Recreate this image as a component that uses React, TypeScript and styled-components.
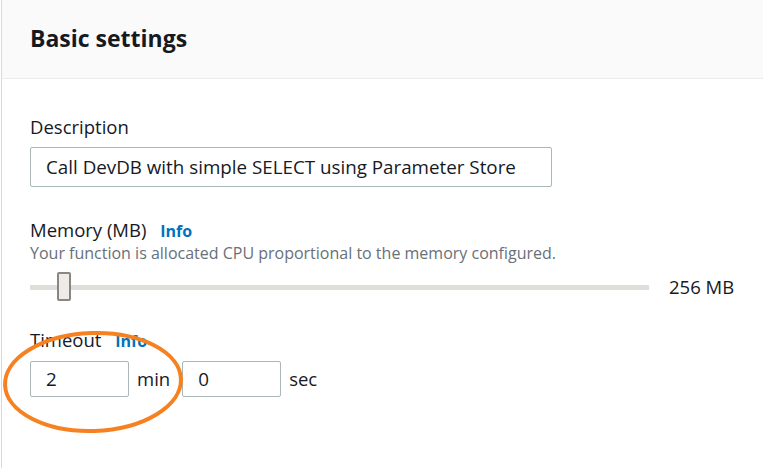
import styled, { createGlobalStyle } from "styled-components";

const GlobalStyle = createGlobalStyle`
  body {
    margin: 0;
    background: #ffffff;
    font-family: "Open Sans", "Noto Sans", "Liberation Sans", sans-serif;
    color: #16191f;
  }
  * {
    box-sizing: border-box;
  }
`;

const memory = { min: 128, max: 3008, value: 256 };

export default function App() {
  const handleLeft = Math.round(
    ((memory.value - memory.min) / (memory.max - memory.min)) * 600
  );
  return (
    <>
      <GlobalStyle />
      <Panel>
        <Header>
          <Title>Basic settings</Title>
        </Header>
        <Body>
          <Field>
            <Label>Description</Label>
            <TextInput
              width="522px"
              height="40px"
              defaultValue="Call DevDB with simple SELECT using Parameter Store"
            />
          </Field>

          <Field top="32px">
            <Label>
              Memory (MB) <Info>Info</Info>
            </Label>
            <Hint>
              Your function is allocated CPU proportional to the memory
              configured.
            </Hint>
            <SliderRow>
              <Track>
                <Handle style={{ left: `${handleLeft}px` }} />
              </Track>
              <Value>{memory.value} MB</Value>
            </SliderRow>
          </Field>

          <Field top="29px">
            <Label>
              Timeout <Info>Info</Info>
            </Label>
            <TimeRow>
              <TextInput width="99px" height="36px" defaultValue="2" />
              <Unit>min</Unit>
              <TextInput width="99px" height="36px" defaultValue="0" />
              <Unit>sec</Unit>
            </TimeRow>
          </Field>
        </Body>
        <Mark width="190" height="110" viewBox="0 0 190 110">
          <ellipse
            cx="92"
            cy="53"
            rx="88"
            ry="49"
            fill="none"
            stroke="#f68121"
            strokeWidth="4"
            transform="rotate(-2 92 53)"
          />
        </Mark>
      </Panel>
    </>
  );
}

const Panel = styled.div`
  position: relative;
  height: 468px;
  margin-left: 1px;
  border-left: 1px solid #d5dbdb;
`;

const Header = styled.div`
  height: 79px;
  padding: 0 28px;
  display: flex;
  align-items: center;
  background: #fafafa;
  border-bottom: 1px solid #eaeded;
`;

const Title = styled.h2`
  margin: 0 0 2px;
  font-size: 23px;
  font-weight: 700;
  line-height: 30px;
`;

const Body = styled.div`
  padding: 37px 28px 0;
`;

const Field = styled.div<{ top?: string }>`
  margin-top: ${({ top }) => top ?? "0"};
  display: flex;
  flex-direction: column;
`;

const Label = styled.div`
  font-size: 18.5px;
  line-height: 22px;
  margin-bottom: 1px;
`;

const Info = styled.span`
  margin-left: 9px;
  color: #0073bb;
  font-size: 16px;
  font-weight: 700;
`;

const Hint = styled.div`
  font-size: 16px;
  line-height: 20px;
  color: #687078;
`;

const TextInput = styled.input<{ width: string; height: string }>`
  margin-top: 8px;
  width: ${({ width }) => width};
  height: ${({ height }) => height};
  padding: 0 15px;
  border: 1px solid #aab7b8;
  border-radius: 2px;
  font-family: inherit;
  font-size: 18.8px;
  color: #16191f;
  background: #ffffff;
  outline: 0;
`;

const SliderRow = styled.div`
  margin-top: 8px;
  height: 29px;
  display: flex;
  align-items: center;
  gap: 20px;
`;

const Track = styled.div`
  position: relative;
  width: 619px;
  height: 5px;
  margin-top: 3px;
  background: #e1ddd8;
`;

const Handle = styled.div`
  position: absolute;
  top: -13px;
  width: 14px;
  height: 29px;
  background: #eeeceb;
  border: 2px solid #8d8680;
  border-radius: 2px;
`;

const Value = styled.span`
  font-size: 18.5px;
  margin-top: 2px;
`;

const TimeRow = styled.div`
  display: flex;
  align-items: flex-end;
`;

const Unit = styled.span`
  margin: 0 12px 7px 8px;
  font-size: 18.5px;
  line-height: 22px;
`;

const Mark = styled.svg`
  position: absolute;
  left: -1px;
  top: 329px;
  pointer-events: none;
`;
